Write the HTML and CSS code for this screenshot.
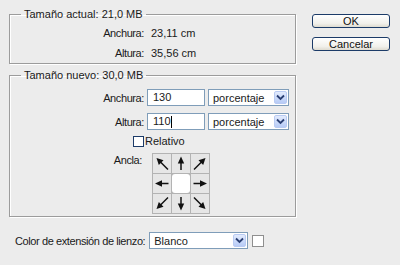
FILE: index.html
```html
<!DOCTYPE html>
<html lang="es">
<head>
  <meta charset="UTF-8" />
  <title>Tamaño de lienzo</title>
  <link rel="stylesheet" href="styles.css">
</head>
<body>
  <svg class="defs" width="0" height="0">
    <symbol id="arrow" viewBox="0 0 18 19">
      <line x1="9" y1="16" x2="9" y2="7" stroke="#111" stroke-width="1.5" />
      <polygon points="9,2.5 5.8,9.5 12.2,9.5" fill="#111" />
    </symbol>
    <symbol id="diag" viewBox="0 0 18 19">
      <line x1="15" y1="15.5" x2="6.5" y2="7" stroke="#111" stroke-width="1.5" />
      <polygon points="3.5,4 10.5,6.3 5.8,11" fill="#111" />
    </symbol>
  </svg>

  <div class="dialog">
    <div class="main">
      <fieldset class="group current">
        <legend>Tamaño actual: 21,0 MB</legend>
        <div class="info">
          <span class="lbl">Anchura:</span><span>23,11 cm</span>
          <span class="lbl">Altura:</span><span>35,56 cm</span>
        </div>
      </fieldset>

      <fieldset class="group new">
        <legend>Tamaño nuevo: 30,0 MB</legend>
        <div class="fields">
          <label class="lbl">Anchura:</label>
          <div class="input">130</div>
          <div class="select units"><span>porcentaje</span><span class="drop"><svg width="9" height="7" viewBox="0 0 9 7"><path d="M1 1.5 L4.5 5 L8 1.5" fill="none" stroke="#2a3f73" stroke-width="1.8"/></svg></span></div>

          <label class="lbl">Altura:</label>
          <div class="input">110<span class="caret"></span></div>
          <div class="select units"><span>porcentaje</span><span class="drop"><svg width="9" height="7" viewBox="0 0 9 7"><path d="M1 1.5 L4.5 5 L8 1.5" fill="none" stroke="#2a3f73" stroke-width="1.8"/></svg></span></div>
        </div>

        <div class="check-row">
          <span class="box"></span><span>Relativo</span>
        </div>

        <div class="anchor-row">
          <span class="lbl">Ancla:</span>
          <div class="anchor">
            <div class="cell"><svg class="r0"><use href="#diag"/></svg></div>
            <div class="cell"><svg class="r0"><use href="#arrow"/></svg></div>
            <div class="cell"><svg class="r90"><use href="#diag"/></svg></div>
            <div class="cell"><svg class="r270"><use href="#arrow"/></svg></div>
            <div class="cell center"></div>
            <div class="cell"><svg class="r90"><use href="#arrow"/></svg></div>
            <div class="cell"><svg class="r270"><use href="#diag"/></svg></div>
            <div class="cell"><svg class="r180"><use href="#arrow"/></svg></div>
            <div class="cell"><svg class="r180"><use href="#diag"/></svg></div>
          </div>
        </div>
      </fieldset>
    </div>

    <div class="actions">
      <button>OK</button>
      <button>Cancelar</button>
    </div>
  </div>

  <div class="bottom">
    <span class="bottom-lbl">Color de extensión de lienzo:</span>
    <div class="select color"><span>Blanco</span><span class="drop"><svg width="9" height="7" viewBox="0 0 9 7"><path d="M1 1.5 L4.5 5 L8 1.5" fill="none" stroke="#2a3f73" stroke-width="1.8"/></svg></span></div>
    <span class="swatch"></span>
  </div>
</body>
</html>
```

FILE: styles.css
```css
body {
  margin: 0;
  width: 400px;
  height: 265px;
  background: #ececec;
  font-family: "Liberation Sans", Arial, sans-serif;
  font-size: 11px;
  color: #1a1a1a;
  overflow: hidden;
}
.defs {
  position: absolute;
}
.dialog {
  display: flex;
  padding-top: 8px;
}
.main {
  width: 287px;
  margin-left: 9px;
}
.group {
  margin: 0;
  padding: 0;
  border: 1px solid #9c9c9c;
  box-shadow: inset 1px 1px #fff, 1px 1px #fff;
  min-width: 0;
}
.group legend {
  margin-left: 11px;
  padding: 0 3px;
  line-height: 13px;
}
.group.new {
  margin-top: 5px;
  height: 146px;
}
.info {
  display: grid;
  grid-template-columns: 134px auto;
  column-gap: 7px;
  line-height: 20px;
  padding-top: 2px;
}
.lbl {
  text-align: right;
  letter-spacing: -0.4px;
}
.fields {
  display: grid;
  grid-template-columns: 134px 58px 81px;
  column-gap: 3px;
  row-gap: 7px;
  align-items: center;
  padding-top: 7px;
}
.input {
  height: 15px;
  line-height: 15px;
  background: #fff;
  border: 1px solid #7f9db9;
  padding-left: 5px;
  display: flex;
  align-items: center;
}
.caret {
  width: 1px;
  height: 12px;
  background: #000;
}
.select {
  height: 15px;
  background: #fff;
  border: 1px solid #7f9db9;
  display: flex;
  align-items: center;
  justify-content: space-between;
  padding-left: 4px;
}
.drop {
  width: 13px;
  height: 13px;
  margin-right: 1px;
  border: 1px solid #b9cbf3;
  border-radius: 2px;
  background: linear-gradient(#e2ebfd, #b7cbf6);
  display: flex;
  align-items: center;
  justify-content: center;
  box-sizing: border-box;
}
.check-row {
  display: flex;
  align-items: center;
  padding-left: 123px;
  margin-top: 5px;
  height: 12px;
}
.box {
  width: 9px;
  height: 9px;
  border: 1px solid #1c3b68;
  background: #fff;
  margin-right: 1px;
}
.anchor-row {
  display: flex;
  margin-top: 6px;
}
.anchor-row .lbl {
  width: 132px;
  margin-top: 1px;
}
.anchor {
  margin-left: 10px;
  display: grid;
  grid-template-columns: repeat(3, 18px);
  grid-template-rows: repeat(3, 19px);
  gap: 1px;
  padding: 1px;
  background: #b3b3b3;
}
.cell {
  background: #e6e6e6;
  display: flex;
}
.cell svg {
  width: 18px;
  height: 19px;
}
.cell.center {
  background: #fff;
  border-radius: 3px;
}
.r90 { transform: rotate(90deg); }
.r180 { transform: rotate(180deg); }
.r270 { transform: rotate(270deg); }
.actions {
  display: flex;
  flex-direction: column;
  gap: 9px;
  margin-left: 16px;
  padding-top: 6px;
}
.actions button {
  width: 78px;
  height: 14px;
  padding: 0;
  font: inherit;
  line-height: 12px;
  color: #111;
  border: 1px solid #1c3b68;
  border-radius: 3px;
  background: linear-gradient(#ffffff, #f1f0eb 70%, #dedbd0);
}
.bottom {
  display: flex;
  align-items: center;
  padding-left: 15px;
  margin-top: 15px;
}
.bottom-lbl {
  letter-spacing: -0.4px;
}
.bottom .color {
  width: 93px;
  margin-left: 4px;
}
.swatch {
  width: 10px;
  height: 10px;
  margin-left: 4px;
  background: #fff;
  border: 1px solid #8f8f8f;
}
```
